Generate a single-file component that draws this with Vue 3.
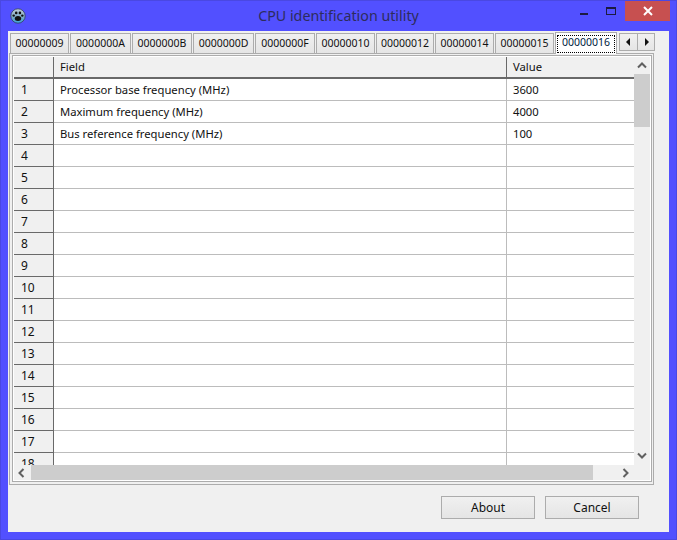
<script setup>
const tabs = [
  { id: '00000009', w: 59 }, { id: '0000000A', w: 61 }, { id: '0000000B', w: 60 }, { id: '0000000D', w: 61 },
  { id: '0000000F', w: 60 }, { id: '00000010', w: 59 }, { id: '00000012', w: 58 }, { id: '00000014', w: 59 },
  { id: '00000015', w: 59 },
]
const fields = ['Processor base frequency (MHz)', 'Maximum frequency (MHz)', 'Bus reference frequency (MHz)']
const values = ['3600', '4000', '100']
const rows = Array.from({ length: 18 }, (_, i) => ({
  n: i + 1,
  field: fields[i] || '',
  value: values[i] || '',
}))
</script>

<template>
  <div class="window">
    <header class="titlebar">
      <svg class="app-icon" width="16" height="16" viewBox="0 0 16 16">
        <defs>
          <linearGradient id="g" x1="0" y1="0" x2="0" y2="1">
            <stop offset="0" stop-color="#c4cfd8" />
            <stop offset="0.55" stop-color="#7fa9c4" />
            <stop offset="1" stop-color="#38a4e0" />
          </linearGradient>
        </defs>
        <circle cx="8" cy="8" r="7.2" fill="url(#g)" stroke="#33415c" stroke-width="0.8" />
        <ellipse cx="8" cy="10.4" rx="3.2" ry="2.5" fill="#111" />
        <circle cx="3.7" cy="7.6" r="1.2" fill="#111" />
        <circle cx="6.2" cy="4.9" r="1.3" fill="#111" />
        <circle cx="9.9" cy="4.9" r="1.3" fill="#111" />
        <circle cx="12.3" cy="7.6" r="1.2" fill="#111" />
      </svg>
      <div class="title">CPU identification utility</div>
      <div class="controls">
        <span class="min"></span>
        <span class="max"></span>
        <span class="close">
          <svg width="12" height="10" viewBox="0 0 12 10">
            <path d="M2 1 L10 9 M10 1 L2 9" stroke="#fff" stroke-width="2" fill="none" />
          </svg>
        </span>
      </div>
    </header>

    <main class="client">
      <div class="tabbar">
        <div v-for="t in tabs" :key="t.id" class="tab" :style="{ width: t.w + 'px' }">{{ t.id }}</div>
        <div class="tab active"><span class="focus">00000016</span></div>
        <div class="tab-nav">
          <button class="nav-btn">
            <svg width="5" height="8" viewBox="0 0 5 8"><path d="M4 0 L0 4 L4 8 Z" fill="#111" /></svg>
          </button>
          <button class="nav-btn">
            <svg width="5" height="8" viewBox="0 0 5 8"><path d="M1 0 L5 4 L1 8 Z" fill="#111" /></svg>
          </button>
        </div>
      </div>

      <section class="pane">
        <div class="frame">
          <div class="table-wrap">
            <div class="table">
              <div class="row head">
                <div class="c num"></div>
                <div class="c field">Field</div>
                <div class="c value">Value</div>
              </div>
              <div v-for="r in rows" :key="r.n" class="row">
                <div class="c num">{{ r.n }}</div>
                <div class="c field">{{ r.field }}</div>
                <div class="c value">{{ r.value }}</div>
              </div>
            </div>
            <div class="vscroll">
              <svg class="chev" width="10" height="7" viewBox="0 0 10 7"><path d="M1 5.5 L5 1.5 L9 5.5" stroke="#606060" stroke-width="2" fill="none" /></svg>
              <div class="vthumb"></div>
              <svg class="chev down" width="10" height="7" viewBox="0 0 10 7"><path d="M1 1.5 L5 5.5 L9 1.5" stroke="#606060" stroke-width="2" fill="none" /></svg>
            </div>
          </div>
          <div class="hscroll">
            <svg class="chevh" width="7" height="10" viewBox="0 0 7 10"><path d="M5.5 1 L1.5 5 L5.5 9" stroke="#606060" stroke-width="2" fill="none" /></svg>
            <div class="hthumb"></div>
            <svg class="chevh" width="7" height="10" viewBox="0 0 7 10"><path d="M1.5 1 L5.5 5 L1.5 9" stroke="#606060" stroke-width="2" fill="none" /></svg>
          </div>
        </div>
      </section>

      <footer class="actions">
        <button class="btn">About</button>
        <button class="btn">Cancel</button>
      </footer>
    </main>
  </div>
</template>

<style>
html, body { margin: 0; background: #5250ff; }
</style>

<style scoped>
* { box-sizing: border-box; }
.window {
  width: 677px;
  height: 540px;
  background: #5250ff;
  padding: 0 8px 8px;
  display: flex;
  flex-direction: column;
  overflow: hidden;
  font-family: "Noto Sans", sans-serif;
  font-size: 11.25px;
  color: #111;
  box-shadow: inset 0 0 0 1px #4a48e2;
}
.titlebar {
  height: 31px;
  flex: none;
  display: flex;
  position: relative;
  align-items: flex-start;
}
.app-icon { margin: 8px 0 0 2px; }
.title {
  position: absolute;
  left: 0;
  right: 0;
  top: 6px;
  text-align: center;
  font-size: 14.25px;
  line-height: 19px;
  color: #2d2c5c;
}
.controls {
  margin-left: auto;
  display: flex;
  align-items: flex-start;
  margin-right: -1px;
}
.min { width: 8px; height: 2px; background: #1c1b40; margin: 13px 18px 0 0; }
.max { width: 10px; height: 8px; border: 1px solid #1c1b40; border-top-width: 2px; margin: 7px 9px 0 0; }
.close {
  width: 45px;
  height: 20px;
  background: #c75050;
  display: flex;
  align-items: center;
  justify-content: center;
  margin-top: 1px;
}
.client {
  flex: 1;
  background: #f0f0f0;
  padding: 2px 15px 0 1px;
  display: flex;
  flex-direction: column;
}
.tabbar {
  display: flex;
  height: 20px;
  flex: none;
  position: relative;
  z-index: 1;
  padding-left: 1px;
}
.tab {
  height: 21px;
  border: 1px solid #acacac;
  margin-right: 1px;
  background: linear-gradient(#f0f0f0, #e5e5e5);
  display: flex;
  align-items: center;
  justify-content: center;
  line-height: 1;
  flex: none;
  font-size: 10.5px;
}
.tab.active {
  width: 62px;
  height: 22px;
  margin-top: -1px;
  background: #fff;
  border-bottom: none;
  padding: 2px 1px 1px;
  color: #001a40;
  align-items: stretch;
}
.focus {
  flex: 1;
  border: 1px dotted #000;
  display: flex;
  align-items: center;
  justify-content: center;
  padding-bottom: 3px;
}
.tab-nav {
  display: flex;
  height: 18px;
  margin-left: 1px;
  flex: none;
}
.nav-btn {
  width: 18px;
  height: 18px;
  padding: 0;
  border: 1px solid #acacac;
  background: linear-gradient(#f0f0f0, #e5e5e5);
  display: flex;
  align-items: center;
  justify-content: center;
}
.nav-btn:first-child { width: 19px; }
.nav-btn + .nav-btn { margin-left: -1px; }
.pane {
  height: 432px;
  border: 1px solid #acacac;
  padding: 1px 1px 2px 2px;
  flex: none;
}
.frame {
  height: 100%;
  border: 1px solid #acacac;
  padding: 1px;
  background: #fff;
  display: flex;
  flex-direction: column;
}
.table-wrap {
  flex: 1;
  min-height: 0;
  display: flex;
}
.table {
  flex: 1;
  min-width: 0;
  overflow: hidden;
  background: #fff;
}
.row {
  display: flex;
  height: 22px;
  border-bottom: 1px solid #bcbcbc;
}
.row.head {
  height: 23px;
  border-bottom: 2px solid #696969;
  background: #f0f0f0;
  margin-top: -1px;
  padding-top: 1px;
}
.c {
  display: flex;
  align-items: center;
  padding-left: 6px;
  line-height: 1;
}
.num {
  width: 40px;
  flex: none;
  background: #f0f0f0;
  border-right: 1px solid #696969;
  box-shadow: 0 1px 0 #696969;
  font-size: 12px;
  padding-left: 7px;
}
.field {
  width: 453px;
  flex: none;
  border-right: 1px solid #bcbcbc;
}
.head .field { border-right-color: #696969; }
.head .num { box-shadow: none; }
.value { flex: 1; }
.vscroll {
  width: 16px;
  background: #f0f0f0;
  display: flex;
  flex-direction: column;
  align-items: center;
  flex: none;
}
.chev { margin: 5px 0 5px; flex: none; }
.vthumb { width: 16px; height: 53px; background: #cdcdcd; flex: none; }
.chev.down { margin-top: auto; margin-bottom: 6px; }
.hscroll {
  height: 15px;
  flex: none;
  display: flex;
  align-items: center;
  background: #f0f0f0;
}
.chevh { margin: 0 6px 0 4px; flex: none; }
.hthumb { width: 562px; height: 15px; background: #cdcdcd; flex: none; }
.hscroll .chevh:last-child { margin: 0 0 0 29px; }
.actions {
  flex: 1;
  display: flex;
  justify-content: flex-end;
  gap: 10px;
  padding: 11px 15px 0 0;
}
.btn {
  width: 94px;
  height: 23px;
  border: 1px solid #acacac;
  background: linear-gradient(#f0f0f0, #e5e5e5);
  font: inherit;
  font-size: 12px;
  color: #111;
  padding: 0;
}
</style>
